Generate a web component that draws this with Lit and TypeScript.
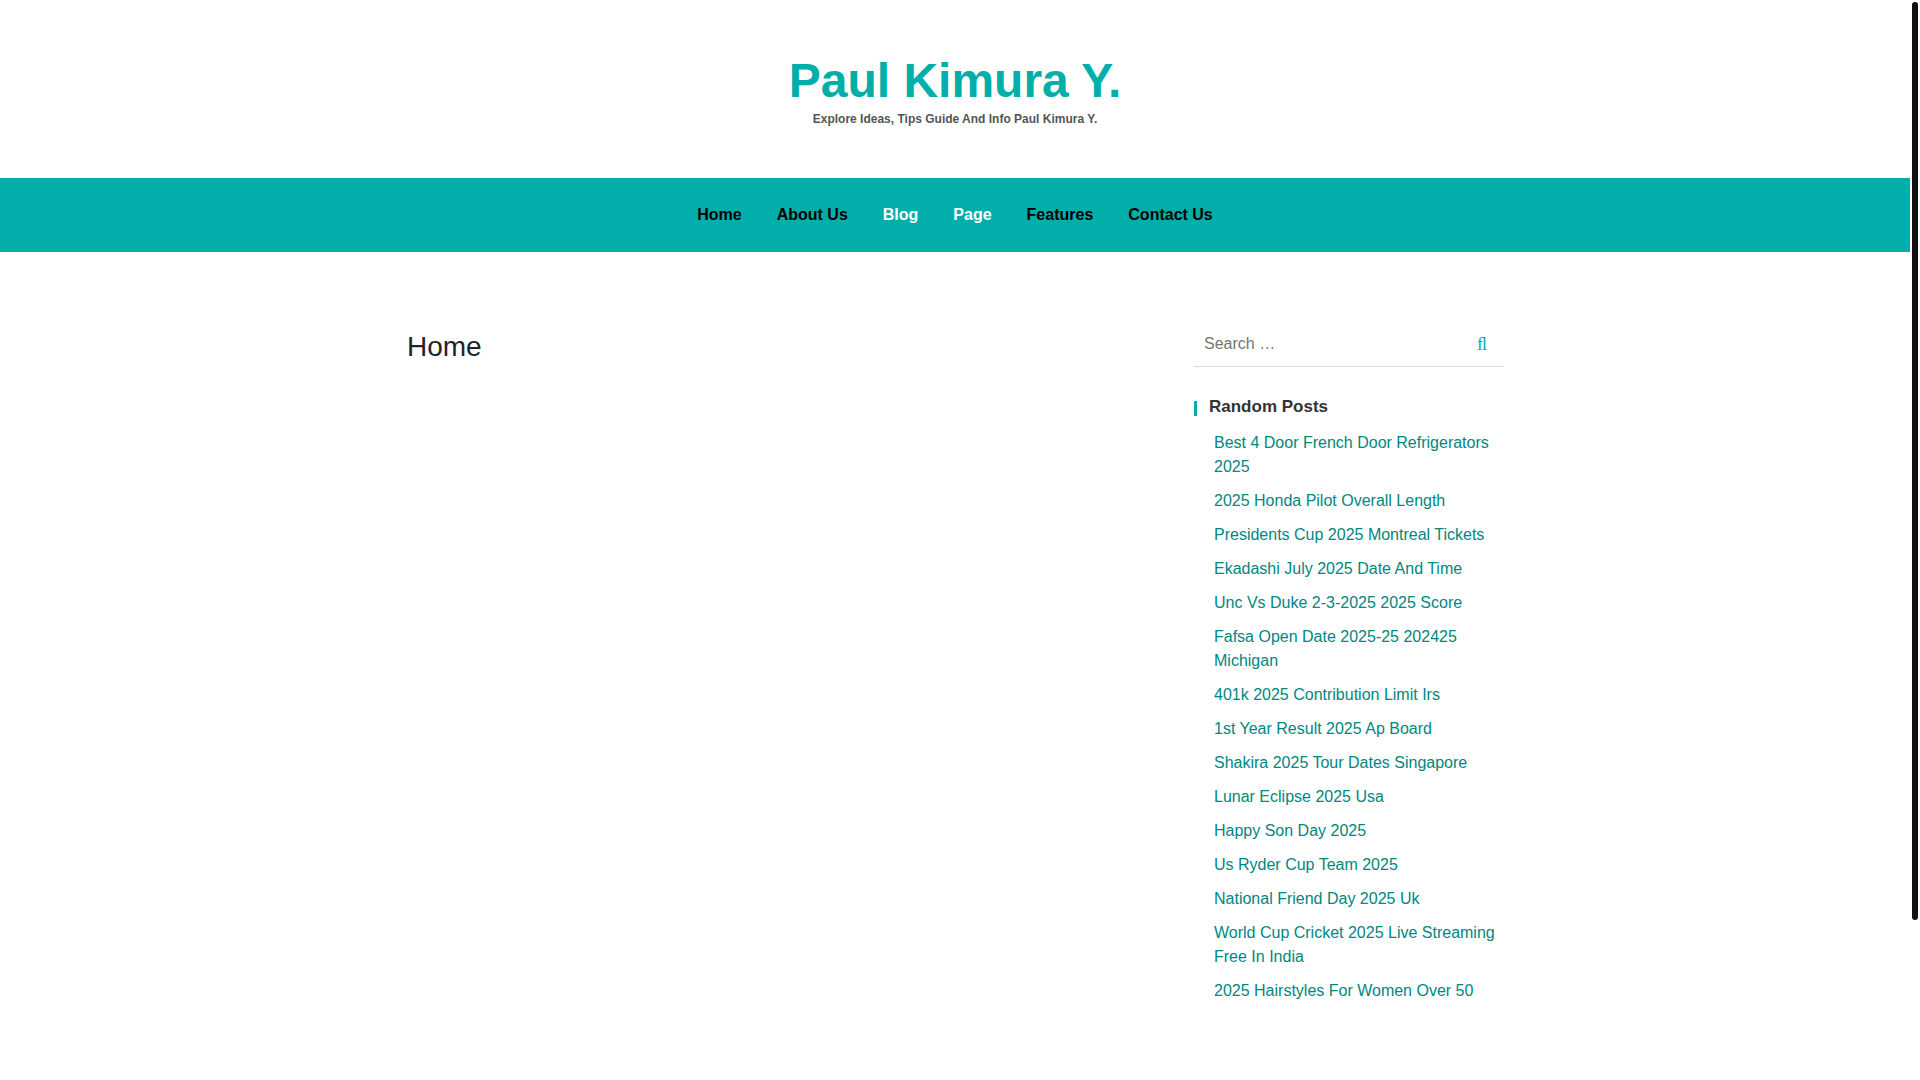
import { LitElement, html, css } from "lit";
import { customElement } from "lit/decorators.js";
import { classMap } from "lit/directives/class-map.js";

interface NavItem {
  label: string;
  light?: boolean;
}

const NAV: NavItem[] = [
  { label: "Home" },
  { label: "About Us" },
  { label: "Blog", light: true },
  { label: "Page", light: true },
  { label: "Features" },
  { label: "Contact Us" },
];

const POSTS: string[] = [
  "Best 4 Door French Door Refrigerators 2025",
  "2025 Honda Pilot Overall Length",
  "Presidents Cup 2025 Montreal Tickets",
  "Ekadashi July 2025 Date And Time",
  "Unc Vs Duke 2-3-2025 2025 Score",
  "Fafsa Open Date 2025-25 202425 Michigan",
  "401k 2025 Contribution Limit Irs",
  "1st Year Result 2025 Ap Board",
  "Shakira 2025 Tour Dates Singapore",
  "Lunar Eclipse 2025 Usa",
  "Happy Son Day 2025",
  "Us Ryder Cup Team 2025",
  "National Friend Day 2025 Uk",
  "World Cup Cricket 2025 Live Streaming Free In India",
  "2025 Hairstyles For Women Over 50",
];

@customElement("site-header")
export class SiteHeader extends LitElement {
  static styles = css`
    :host {
      display: block;
      text-align: center;
    }
    .brand {
      padding: 52px 16px 50px;
    }
    .title {
      margin: 0;
      font-size: 48px;
      line-height: 58px;
      font-weight: 700;
    }
    .title a {
      color: #02aea9;
      text-decoration: none;
    }
    .tagline {
      margin: 0;
      font-size: 12px;
      line-height: 18px;
      font-weight: 700;
      color: #555;
    }
    .nav {
      background: #02aea9;
      padding: 25px 16px;
    }
    .menu {
      display: flex;
      flex-wrap: wrap;
      justify-content: center;
      gap: 0 35px;
      margin: 0;
      padding: 0;
      list-style: none;
      line-height: 24px;
    }
    .link {
      font-size: 16px;
      font-weight: 700;
      color: #000;
      text-decoration: none;
    }
    .link.light {
      color: #fff;
    }
  `;

  render() {
    return html`
      <header class="brand">
        <h1 class="title"><a href="#">Paul Kimura Y.</a></h1>
        <p class="tagline">Explore Ideas, Tips Guide And Info Paul Kimura Y.</p>
      </header>
      <nav class="nav">
        <ul class="menu">
          ${NAV.map(
            (n) => html`<li>
              <a class=${classMap({ link: true, light: !!n.light })} href="#">${n.label}</a>
            </li>`
          )}
        </ul>
      </nav>
    `;
  }
}

@customElement("site-sidebar")
export class SiteSidebar extends LitElement {
  static styles = css`
    :host {
      display: block;
    }
    .search {
      display: flex;
      align-items: center;
      border-bottom: 1px solid #ddd;
      padding: 1px 0 9px;
    }
    .label {
      flex: 1;
      min-width: 0;
      display: flex;
    }
    .field {
      flex: 1;
      min-width: 0;
      border: 0;
      outline: 0;
      background: transparent;
      padding: 0 10px;
      height: 26px;
      font: 16px/24px "Liberation Sans", Arial, sans-serif;
      color: #333;
    }
    .field::placeholder {
      color: #757575;
      opacity: 1;
    }
    .submit {
      border: 0;
      background: transparent;
      padding: 0 16px;
      font: 18px/24px "Liberation Serif", serif;
      color: #02aea9;
      cursor: pointer;
    }
    .heading {
      display: flex;
      align-items: center;
      gap: 12px;
      margin: 30px 0 14px;
      font-size: 17px;
      line-height: 20px;
      font-weight: 700;
      color: #333;
    }
    .heading::before {
      content: "";
      width: 3px;
      height: 15px;
      margin-top: 3px;
      background: #02aea9;
    }
    .posts {
      display: flex;
      flex-direction: column;
      gap: 10px;
      margin: 0;
      padding: 0 0 0 20px;
      list-style: none;
      font-size: 16px;
      line-height: 24px;
    }
    .post {
      color: #00877f;
      text-decoration: none;
    }
  `;

  render() {
    return html`
      <form class="search" role="search" @submit=${(e: Event) => e.preventDefault()}>
        <label class="label">
          <input class="field" type="text" placeholder="Search …" aria-label="Search" />
        </label>
        <button class="submit" type="submit">ﬂ</button>
      </form>
      <section>
        <h2 class="heading">Random Posts</h2>
        <ul class="posts">
          ${POSTS.map((p) => html`<li><a class="post" href="#">${p}</a></li>`)}
        </ul>
      </section>
    `;
  }
}

@customElement("app-root")
export class AppRoot extends LitElement {
  static styles = css`
    :host {
      display: flex;
      min-height: 100vh;
      background: #fff;
      font-family: "Liberation Sans", Arial, sans-serif;
    }
    .page {
      flex: 1;
      min-width: 0;
    }
    .content {
      display: flex;
      justify-content: space-between;
      gap: 32px;
      max-width: 1096px;
      margin: 0 auto;
      padding: 78px 16px 64px;
    }
    .main {
      flex: 1;
      min-width: 0;
    }
    .heading {
      margin: 0;
      font-size: 28px;
      line-height: 34px;
      font-weight: 400;
      color: #212529;
    }
    .sidebar {
      flex: 0 1 309px;
    }
    .rail {
      flex: none;
      width: 6px;
      padding: 2px;
    }
    .thumb {
      height: 85vh;
      border-radius: 3px;
      background: #101111;
    }
  `;

  render() {
    return html`
      <div class="page">
        <site-header></site-header>
        <div class="content">
          <main class="main"><h2 class="heading">Home</h2></main>
          <aside class="sidebar"><site-sidebar></site-sidebar></aside>
        </div>
      </div>
      <div class="rail"><div class="thumb"></div></div>
    `;
  }
}
